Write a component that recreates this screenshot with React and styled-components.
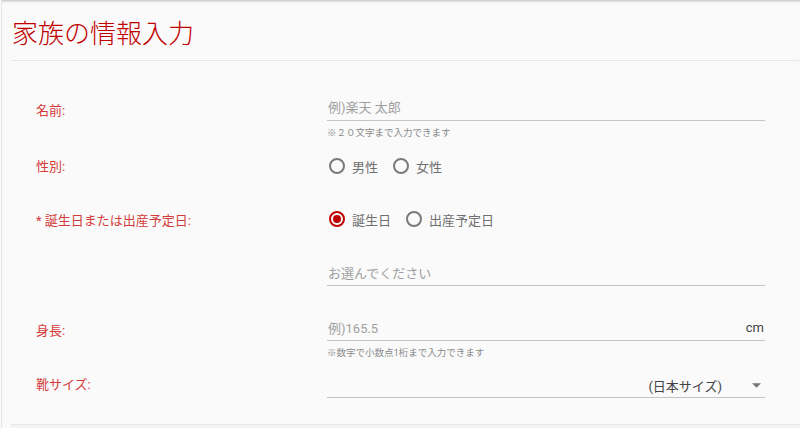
import styled, { createGlobalStyle } from "styled-components";

const GlobalStyle = createGlobalStyle`
  html, body { margin: 0; padding: 0; background: #fafafa; }
  body { font-family: Roboto, "Noto Sans CJK JP", sans-serif; }
`;

const App = () => {
  return (
    <Page>
      <GlobalStyle />
      <Header>
        <Title>家族の情報入力</Title>
      </Header>

      <Form>
        <Row height={50}>
          <Label top={10}>名前:</Label>
          <Field>
            <TextBox height={30}>
              <Placeholder>例)楽天 太郎</Placeholder>
            </TextBox>
            <Hint>※２０文字まで入力できます</Hint>
          </Field>
        </Row>

        <Row height={52}>
          <Label top={16}>性別:</Label>
          <RadioGroup top={15}>
            <Radio label="男性" />
            <Radio label="女性" />
          </RadioGroup>
        </Row>

        <Row height={52}>
          <Label top={18}>* 誕生日または出産予定日:</Label>
          <RadioGroup top={16}>
            <Radio label="誕生日" checked />
            <Radio label="出産予定日" />
          </RadioGroup>
        </Row>

        <Row height={56}>
          <Label />
          <Field>
            <TextBox height={28} top={13}>
              <Placeholder>お選んでください</Placeholder>
            </TextBox>
          </Field>
        </Row>

        <Row height={62}>
          <Label top={20}>身長:</Label>
          <Field>
            <TextBox height={28} top={12}>
              <Placeholder>例)165.5</Placeholder>
              <Unit>cm</Unit>
            </TextBox>
            <Hint>※数字で小数点1桁まで入力できます</Hint>
          </Field>
        </Row>

        <Row height={40}>
          <Label top={12}>靴サイズ:</Label>
          <Field>
            <TextBox height={27} top={8}>
              <SelectValue>(日本サイズ)</SelectValue>
              <Caret viewBox="0 0 10 5">
                <path d="M0 0h10L5 5z" fill="#757575" />
              </Caret>
            </TextBox>
          </Field>
        </Row>
      </Form>
      <Footer />
    </Page>
  );
};

const Radio = ({ label, checked }) => (
  <RadioItem>
    <RadioCircle checked={checked} />
    <RadioText>{label}</RadioText>
  </RadioItem>
);

const Page = styled.div`
  position: relative;
  height: 428px;
  overflow: hidden;
  background: #fafafa;
  border-left: 1px solid #e6e6e6;
  margin-left: 1px;
  box-shadow: inset 0 3px 3px -2px rgba(0, 0, 0, 0.25);
`;

const Header = styled.div`
  margin-left: 10px;
  height: 61px;
  border-bottom: 1px solid #e6e6e6;
  box-sizing: border-box;
`;

const Title = styled.h1`
  margin: 0;
  padding-top: 18px;
  font-size: 26px;
  line-height: 32px;
  font-weight: 300;
  color: #c00000;
  letter-spacing: 0;
`;

const Form = styled.div`
  padding-top: 30px;
  padding-left: 34px;
`;

const Row = styled.div`
  display: flex;
  height: ${(p) => p.height}px;
`;

const Label = styled.div`
  width: 291px;
  flex: none;
  padding-top: ${(p) => p.top || 0}px;
  font-size: 13px;
  line-height: 20px;
  color: #d43c3c;
`;

const Field = styled.div`
  width: 438px;
  display: flex;
  flex-direction: column;
`;

const TextBox = styled.div`
  margin-top: ${(p) => p.top || 0}px;
  height: ${(p) => p.height}px;
  box-sizing: border-box;
  border-bottom: 1px solid #c4c4c4;
  display: flex;
  align-items: center;
  padding-left: 1px;
  padding-top: 2px;
`;

const Placeholder = styled.span`
  flex: 1;
  font-size: 13px;
  color: #a0a0a0;
`;

const Unit = styled.span`
  font-size: 13px;
  color: #424242;
  padding-right: 1px;
`;

const SelectValue = styled.span`
  margin-left: auto;
  margin-right: 30px;
  font-size: 13px;
  color: #424242;
`;

const Caret = styled.svg`
  width: 9px;
  height: 5px;
  margin-right: 4px;
`;

const Hint = styled.div`
  margin-top: 5px;
  font-size: 9.5px;
  line-height: 14px;
  color: #8a8a8a;
`;

const RadioGroup = styled.div`
  display: flex;
  align-items: center;
  padding-top: ${(p) => p.top}px;
  height: 20px;
  padding-left: 2px;
`;

const RadioItem = styled.label`
  display: flex;
  align-items: center;
  margin-right: 15px;
`;

const RadioCircle = styled.span`
  position: relative;
  width: 16px;
  height: 16px;
  box-sizing: border-box;
  border-radius: 50%;
  border: 2px solid ${(p) => (p.checked ? "#bf0000" : "#7a7a7a")};
  &::after {
    content: "";
    display: ${(p) => (p.checked ? "block" : "none")};
    position: absolute;
    left: 2px;
    top: 2px;
    width: 8px;
    height: 8px;
    border-radius: 50%;
    background: #bf0000;
  }
`;

const RadioText = styled.span`
  margin-left: 7px;
  font-size: 13px;
  color: #707070;
`;

const Footer = styled.div`
  position: absolute;
  left: 9px;
  right: 0;
  bottom: 0;
  height: 3px;
  border-top: 1px solid #e8e8e8;
  background: #f3f3f3;
`;

export default App;
